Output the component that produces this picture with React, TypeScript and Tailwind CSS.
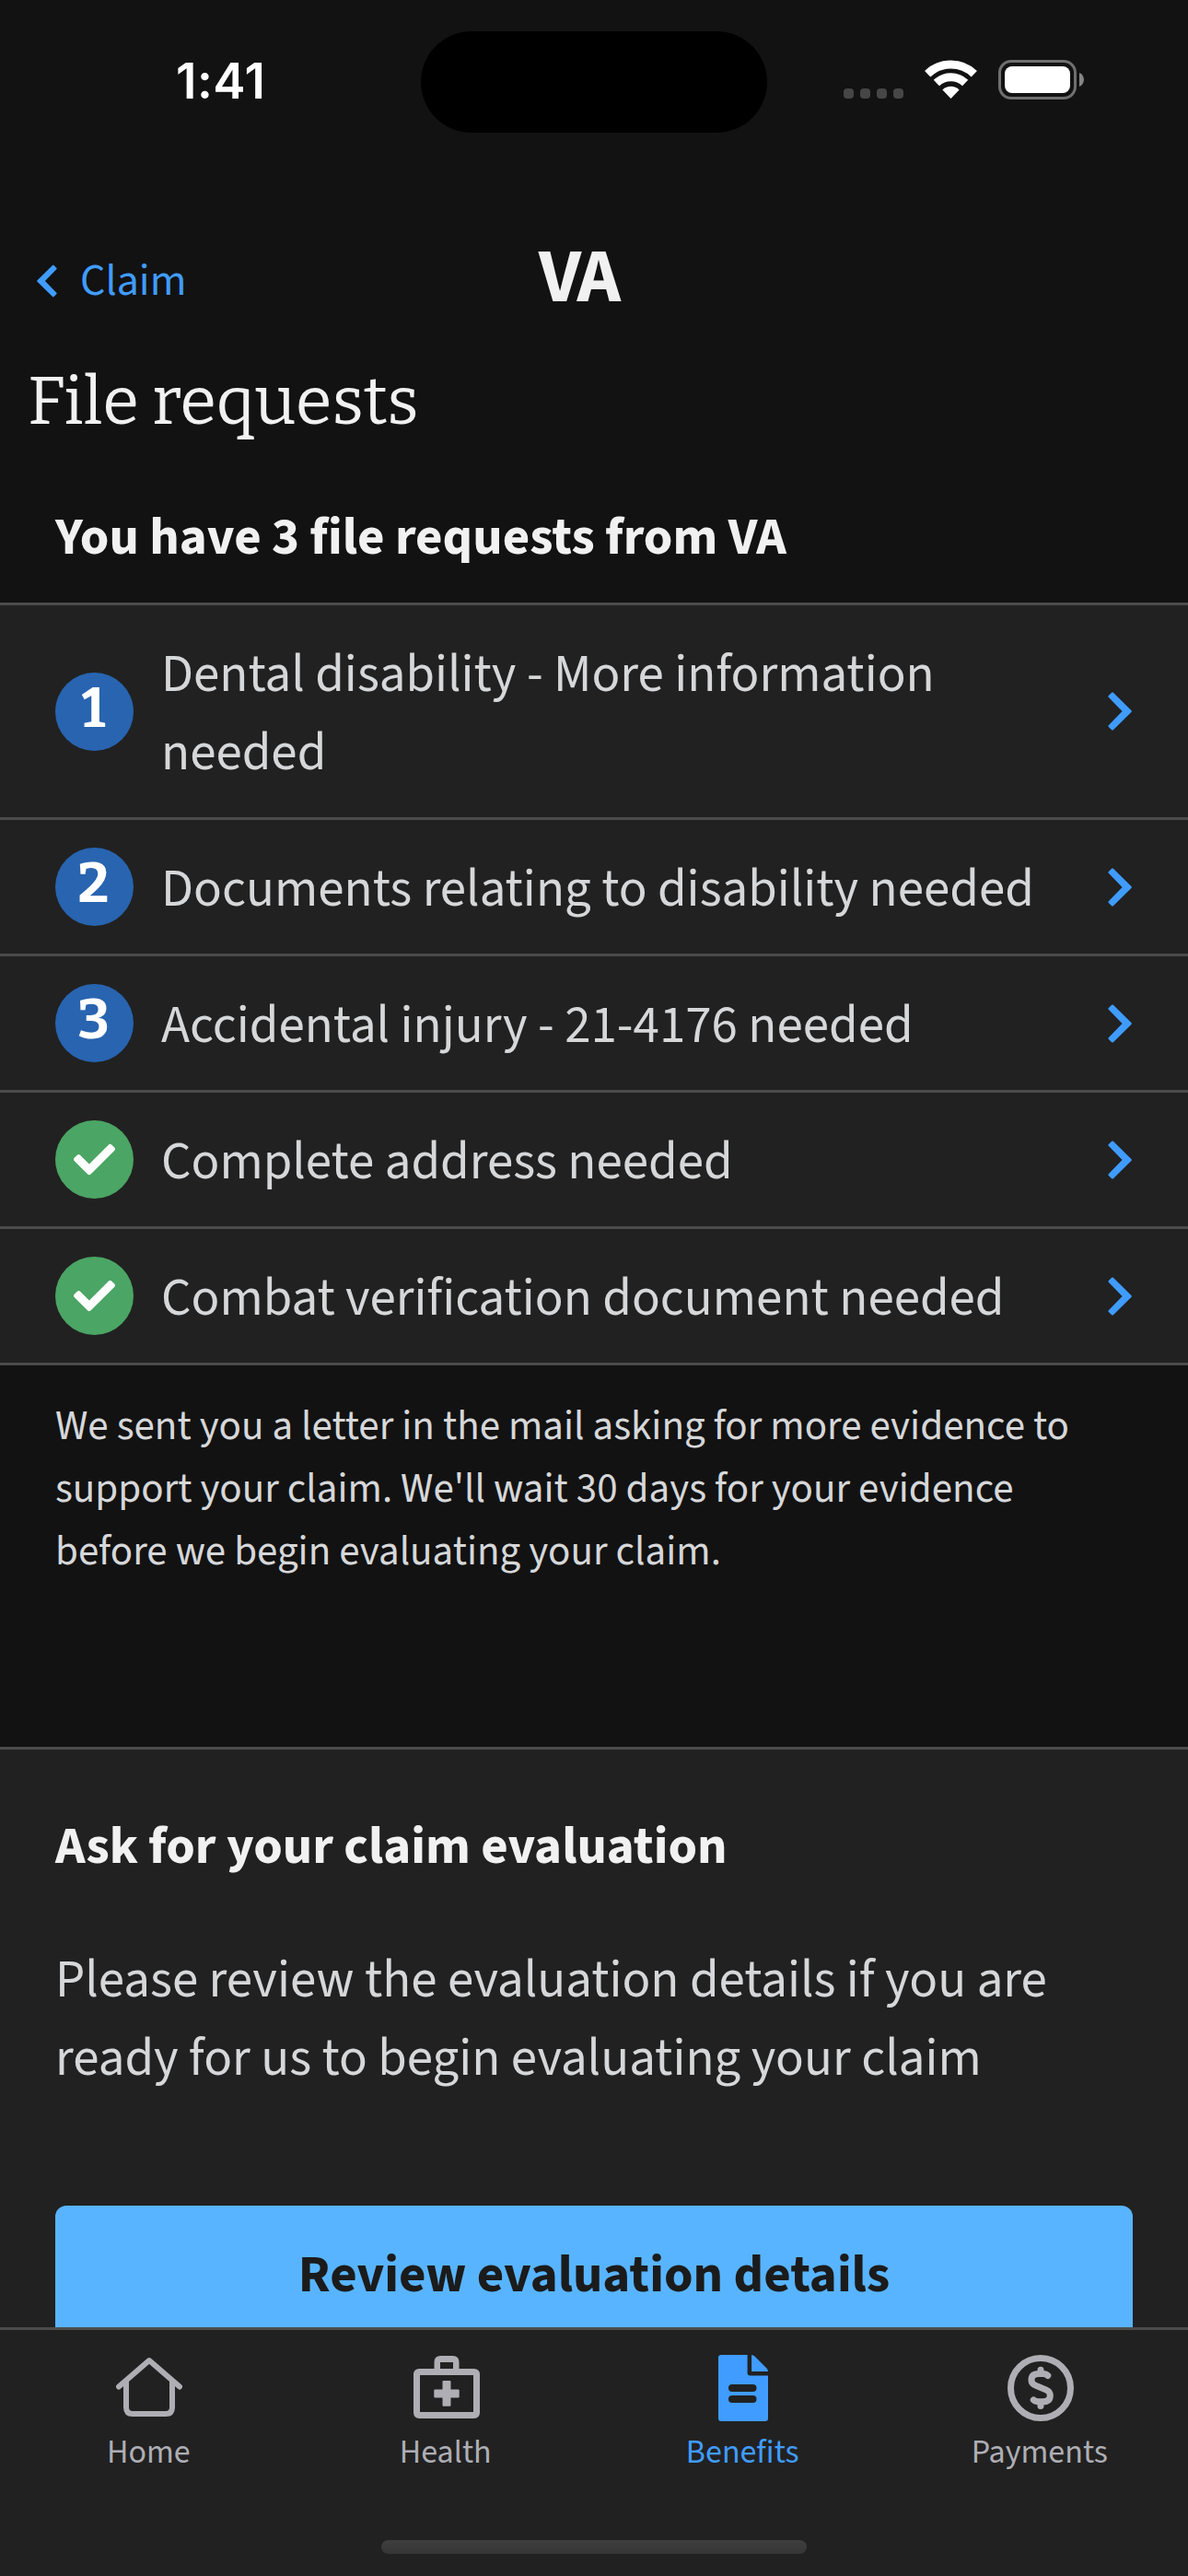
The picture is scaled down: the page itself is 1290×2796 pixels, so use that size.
import type { ReactNode } from 'react';
import { FaCheck } from 'react-icons/fa';

type Request = { label: string; step?: number };

const requests: Request[] = [
  { label: 'Dental disability - More information needed', step: 1 },
  { label: 'Documents relating to disability needed', step: 2 },
  { label: 'Accidental injury - 21-4176 needed', step: 3 },
  { label: 'Complete address needed' },
  { label: 'Combat verification document needed' },
];

function Chevron({ className }: { className: string }) {
  return (
    <svg className={className} viewBox="0 0 26 42" fill="currentColor" stroke="currentColor" strokeWidth="2.500" strokeLinejoin="round">
      <path d="M1.700 5L5 1.700L24.500 21L5 40.300L1.700 37L17.200 21Z" />
    </svg>
  );
}

function WifiIcon() {
  return (
    <svg className="h-[42px] w-[57px]" viewBox="0 0 57 42" fill="none" stroke="#fff" strokeWidth="9">
      <path d="M3.2 15.2A36.5 36.5 0 0 1 53.8 15.2" />
      <path d="M12.9 25.1A22.5 22.5 0 0 1 44.1 25.1" />
      <path d="M28.5 42L19.4 32.4A13 13 0 0 1 37.6 32.4Z" fill="#fff" stroke="none" />
    </svg>
  );
}

function BatteryIcon() {
  return (
    <div className="flex items-center gap-[3px]">
      <div className="h-[43px] w-[85px] rounded-[14px] border-[3px] border-[#6f6f6f] p-1">
        <div className="h-full w-full rounded-[8px] bg-white" />
      </div>
      <svg className="h-[15px] w-[5px]" viewBox="0 0 5 15">
        <path d="M0 0C6.6 2.4 6.6 12.6 0 15Z" fill="#858585" />
      </svg>
    </div>
  );
}

function HomeIcon() {
  return (
    <svg className="h-[72px] w-[72px]" viewBox="0 0 72 72" fill="none" stroke="currentColor" strokeWidth="6" strokeLinecap="round" strokeLinejoin="round">
      <path d="M3 34.5L36 6L69 34.5" />
      <path d="M11 29V57Q11 64 18 64H54Q61 64 61 57V29" />
    </svg>
  );
}

function HealthIcon() {
  return (
    <svg className="h-[72px] w-[72px]" viewBox="0 0 72 72" fill="currentColor">
      <path
        fillRule="evenodd"
        d="M22.5 15V8Q22.5 1 29.5 1H42.5Q49.5 1 49.5 8V15H65.500Q72 15 72 21.500V62.500Q72 69 65.500 69H6.500Q0 69 0 62.500V21.500Q0 15 6.500 15ZM29 15H43V8H29ZM7 22V62H65V22Z"
      />
      <path d="M32.500 28H39.500Q40.500 28 40.500 29V37.500H48.500Q49.700 37.500 49.700 38.500V45.500Q49.700 46.500 48.500 46.500H40.500V54.500Q40.500 55.700 39.500 55.700H32.500Q31.500 55.700 31.500 54.500V46.500H23.500Q22.300 46.500 22.300 45.500V38.500Q22.300 37.500 23.500 37.500H31.500V29Q31.500 28 32.500 28Z" />
    </svg>
  );
}

function BenefitsIcon() {
  return (
    <svg className="h-[72px] w-[72px]" viewBox="0 0 72 72" fill="currentColor">
      <path
        fillRule="evenodd"
        d="M12 0H40.600V19.500Q40.600 22.500 43.600 22.500H63V69Q63 72 60 72H12Q9 72 9 69V3Q9 0 12 0ZM24 32Q20 32 20 36T24 40H46.500Q50.500 40 50.500 36T46.500 32ZM24 44Q20 44 20 48T24 52H46.500Q50.500 52 50.500 48T46.500 44Z"
      />
      <path d="M45.100 0Q47 0 48.500 1.600L61.500 14.500Q63 16 63 18H45.100Z" />
    </svg>
  );
}

function PaymentsIcon() {
  return (
    <svg className="h-[72px] w-[72px]" viewBox="0 0 72 72" fill="none" stroke="currentColor" strokeWidth="7" strokeLinecap="round" strokeLinejoin="round">
      <circle cx="36" cy="36" r="32.500" />
      <path d="M43.800 22.500Q42 20.600 38.500 20.600H34Q26 20.600 26 27.200C26 31.500 29 32.900 36 35.500C43 38.100 46.300 39.500 46.300 44Q46.300 50.800 38.500 50.800H34Q30 50.800 28.300 48.900" />
      <path d="M36 16.200V20M36 52V55.600" />
    </svg>
  );
}

function StatusBar() {
  return (
    <div className="grid h-[144px] grid-cols-[457px_376px_457px] items-start">
      <div className="pt-[57px] pl-[191px] font-['Inter',sans-serif] text-[53px] leading-[62px] font-semibold tracking-[0.5px] text-white">1:41</div>
      <div className="mt-[34px] h-[110px] rounded-full bg-black" />
      <div className="flex items-start pt-[65px] pl-[83px]">
        <div className="mt-[31px] flex gap-[7px]">
          {[0, 1, 2, 3].map((dot) => (
            <span key={dot} className="size-[11px] rounded-[4px] bg-[#464646]" />
          ))}
        </div>
        <div className="ml-[23px]">
          <WifiIcon />
        </div>
        <div className="ml-[23px]">
          <BatteryIcon />
        </div>
      </div>
    </div>
  );
}

function RequestRow({ label, step }: Request) {
  return (
    <li className="flex items-center border-b-[3px] border-[#4b4b4b] px-[60px]">
      {step ? (
        <span className="flex size-[85px] shrink-0 items-center justify-center rounded-full bg-[#2864b0] pr-[2px] pb-[7px] font-['Bitter','Noto_Serif',serif] text-[60px] leading-none font-bold text-white">
          {step}
        </span>
      ) : (
        <span className="flex size-[85px] shrink-0 items-center justify-center rounded-full bg-[#4ba564] text-white">
          <FaCheck size={45} />
        </span>
      )}
      <span className="ml-[30px] w-[990px] pt-[33px] pb-[27px] text-[57px] leading-[85px]">{label}</span>
      <Chevron className="mr-px ml-auto h-[42px] w-[26px] shrink-0 text-[#409cff]" />
    </li>
  );
}

function Tab({ icon, label, active = false }: { icon: ReactNode; label: string; active?: boolean }) {
  return (
    <div className={active ? 'flex flex-col items-center text-[#409cff]' : 'flex flex-col items-center text-[#aeaeb4]'}>
      <div className="pl-[1.5px]">{icon}</div>
      <span className="mt-[9px] text-[36px] leading-[50px]">{label}</span>
    </div>
  );
}

export default function App() {
  return (
    <div className="flex h-[2796px] w-[1290px] flex-col overflow-hidden bg-[#121212] font-['Source_Sans_3','Noto_Sans_CJK_SC',sans-serif] text-[#d6d7d9]">
      <StatusBar />

      <header className="grid h-[240px] grid-cols-3 items-start pt-[110px]">
        <div className="flex items-center pt-[16px] pl-[40px] text-[#409cff]">
          <Chevron className="h-[36px] w-[22px] rotate-180" />
          <span className="ml-[25px] text-[48px] leading-[70px]">Claim</span>
        </div>
        <div className="pr-[34px] text-center text-[83px] leading-[94px] font-bold tracking-[-3px] text-[#f1f1f1]">VA</div>
      </header>

      <h1 className="h-[141px] pt-[2px] pl-[30px] font-['Bitter','Noto_Serif',serif] text-[72px] leading-[100px] text-[#f1f1f1]">File requests</h1>

      <h2 className="h-[129px] pt-[16px] pl-[60px] text-[57px] leading-[85px] font-bold text-[#f1f1f1]">You have 3 file requests from VA</h2>

      <ul className="border-t-[3px] border-[#4b4b4b] bg-[#212121]">
        {requests.map((request) => (
          <RequestRow key={request.label} {...request} />
        ))}
      </ul>

      <p className="h-[414px] px-[60px] pt-[32px] text-[45px] leading-[68px]">
        We sent you a letter in the mail asking for more evidence to support your claim. We'll wait 30 days for your evidence before we begin
        evaluating your claim.
      </p>

      <section className="h-[630px] overflow-hidden border-t-[3px] border-[#4b4b4b] bg-[#212121] px-[60px] pt-[63px]">
        <h2 className="text-[57px] leading-[85px] font-bold text-[#f1f1f1]">Ask for your claim evaluation</h2>
        <p className="mt-[60px] text-[57px] leading-[85px]">Please review the evaluation details if you are ready for us to begin evaluating your claim</p>
        <button className="mt-[117px] h-[150px] w-full rounded-[12px] bg-[#58b4ff] text-[57px] leading-[85px] font-bold text-[#1b1b1b]">
          Review evaluation details
        </button>
      </section>

      <nav className="flex h-[270px] flex-col border-t-[3px] border-[#4b4b4b] bg-[#212121] pt-[27px]">
        <div className="grid grid-cols-4">
          <Tab icon={<HomeIcon />} label="Home" />
          <Tab icon={<HealthIcon />} label="Health" />
          <Tab icon={<BenefitsIcon />} label="Benefits" active />
          <Tab icon={<PaymentsIcon />} label="Payments" />
        </div>
        <div className="mt-auto mb-[24px] h-[15px] w-[462px] self-center rounded-full bg-linear-to-b from-[#3e3e3e] to-[#363636]" />
      </nav>
    </div>
  );
}
